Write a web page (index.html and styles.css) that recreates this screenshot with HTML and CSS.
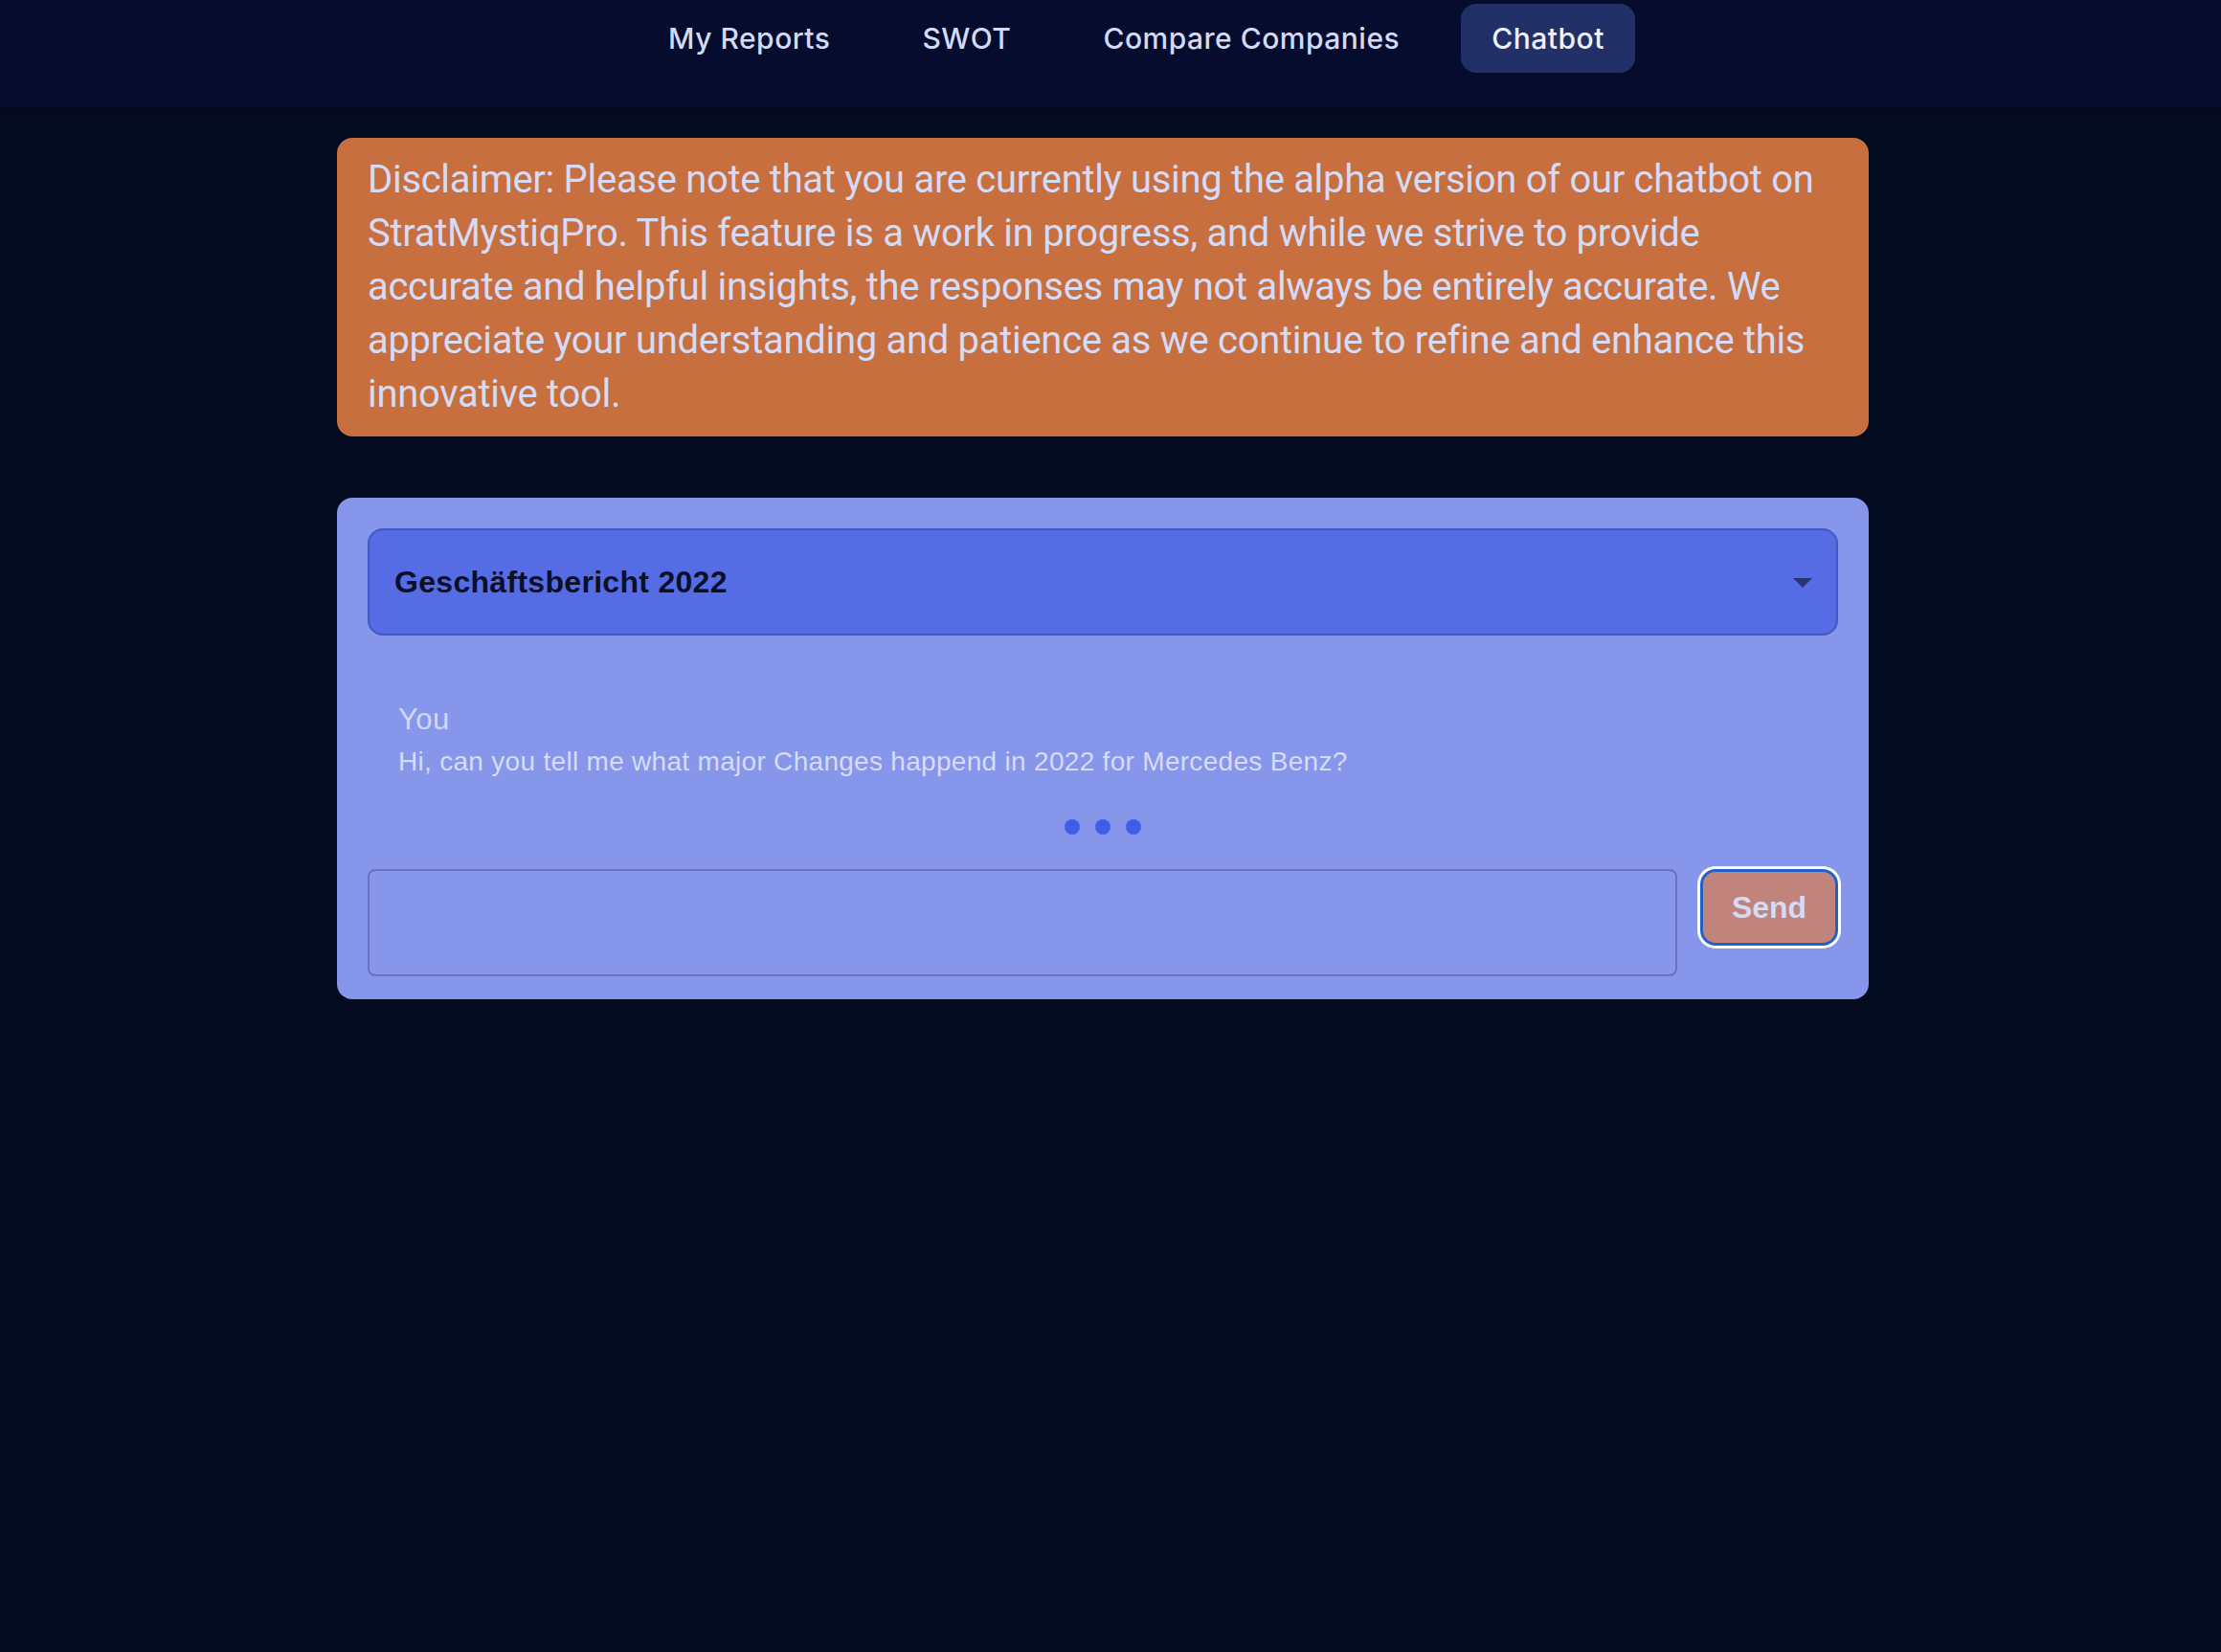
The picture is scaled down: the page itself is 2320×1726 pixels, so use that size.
FILE: index.html
```html
<!DOCTYPE html>
<html lang="en">
<head>
<meta charset="utf-8">
<title>Chatbot - StratMystiqPro</title>
<link rel="stylesheet" href="styles.css">
</head>
<body>
  <nav class="topnav">
    <ul class="nav-list">
      <li><a class="nav-link" href="#">My Reports</a></li>
      <li><a class="nav-link" href="#">SWOT</a></li>
      <li><a class="nav-link" href="#">Compare Companies</a></li>
      <li><a class="nav-link active" href="#">Chatbot</a></li>
    </ul>
  </nav>
  <div class="page">
    <main class="content">
      <div class="disclaimer">Disclaimer: Please note that you are currently using the alpha version of our chatbot on StratMystiqPro. This feature is a work in progress, and while we strive to provide accurate and helpful insights, the responses may not always be entirely accurate. We appreciate your understanding and patience as we continue to refine and enhance this innovative tool.</div>

      <section class="chat-card">
        <div class="select-wrap">
          <div class="report-select">Geschäftsbericht 2022</div>
          <span class="select-arrow"></span>
        </div>

        <div class="messages">
          <div class="message">
            <div class="msg-author">You</div>
            <div class="msg-text">Hi, can you tell me what major Changes happend in 2022 for Mercedes Benz?</div>
          </div>
          <div class="typing">
            <span class="dot"></span>
            <span class="dot"></span>
            <span class="dot"></span>
          </div>
        </div>

        <div class="input-row">
          <div class="chat-input"></div>
          <button class="send-btn" type="button">Send</button>
        </div>
      </section>
    </main>
  </div>
</body>
</html>
```

FILE: styles.css
```css
* {
  box-sizing: border-box;
}

html, body {
  margin: 0;
  padding: 0;
}

body {
  background: #040a1f;
  min-height: 1726px;
  font-family: "Inter", "Liberation Sans", sans-serif;
}

.topnav {
  height: 112px;
  background: #050c2e;
  padding: 4px 0 0 54px;
  box-shadow: 0 2px 6px rgba(0, 0, 0, 0.35);
}

.nav-list {
  list-style: none;
  margin: 0;
  padding: 0;
  display: flex;
  justify-content: center;
  gap: 32px;
}

.nav-link {
  display: block;
  padding: 16px 32px;
  font-size: 30px;
  line-height: 40px;
  font-weight: 500;
  letter-spacing: 0.5px;
  color: #d3daf6;
  text-decoration: none;
  border-radius: 16px;
}

.nav-link.active {
  background: #223068;
  color: #eef0fb;
}

.page {
  padding-right: 16px;
}

.content {
  width: 1600px;
  margin: 32px auto 0;
}

.disclaimer {
  background: #c86f3f;
  color: #d3dbf6;
  font-family: "Roboto", "Inter", sans-serif;
  font-size: 40px;
  line-height: 56px;
  letter-spacing: -0.3px;
  padding: 16px 32px;
  border-radius: 16px;
}

.chat-card {
  margin-top: 64px;
  background: #8596eb;
  border-radius: 16px;
  padding: 32px 32px 24px;
}

.select-wrap {
  position: relative;
}

.report-select {
  height: 112px;
  background: #566ce4;
  border: 2px solid #4457c4;
  border-radius: 16px;
  padding: 0 26px;
  display: flex;
  align-items: center;
  font-family: "Liberation Sans", Arial, sans-serif;
  font-weight: bold;
  font-size: 32px;
  letter-spacing: 0.3px;
  color: #0a0f2a;
}

.select-arrow {
  position: absolute;
  right: 27px;
  top: 52px;
  width: 0;
  height: 0;
  border-left: 10px solid transparent;
  border-right: 10px solid transparent;
  border-top: 10px solid #2a3470;
}

.messages {
  margin-top: 32px;
}

.message {
  padding: 32px;
  font-family: "Liberation Sans", Arial, sans-serif;
}

.msg-author {
  font-size: 31px;
  line-height: 48px;
  letter-spacing: 0.5px;
  color: #d0d8f6;
}

.msg-text {
  font-size: 28px;
  line-height: 40px;
  letter-spacing: 0.3px;
  color: #d5dcf8;
}

.typing {
  margin-top: 8px;
  display: flex;
  justify-content: center;
  gap: 16px;
}

.dot {
  width: 16px;
  height: 16px;
  border-radius: 50%;
  background: #405ce9;
}

.input-row {
  margin-top: 36px;
  display: flex;
  align-items: flex-start;
  gap: 24px;
}

.chat-input {
  flex: 1;
  height: 112px;
  border: 2px solid #6675c0;
  border-radius: 8px;
}

.send-btn {
  width: 144px;
  height: 80px;
  background: #c1847c;
  border: 3px solid #2461c6;
  border-radius: 16px;
  box-shadow: 0 0 0 3px #ffffff;
  font-family: "Liberation Sans", Arial, sans-serif;
  font-weight: bold;
  font-size: 32px;
  color: #d5dbf5;
  padding: 0;
}
```
